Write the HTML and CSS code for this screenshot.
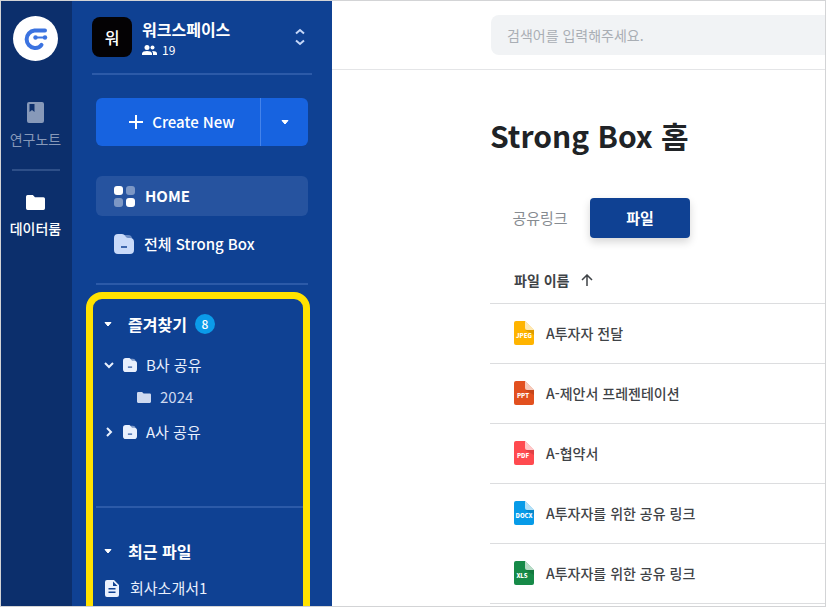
FILE: index.html
```html
<!DOCTYPE html>
<html lang="ko">
<head>
<meta charset="utf-8">
<meta name="viewport" content="width=device-width, initial-scale=1">
<title>Strong Box</title>
<link rel="stylesheet" href="styles.css">
</head>
<body>
<svg class="defs" aria-hidden="true">
  <symbol id="box" viewBox="0 0 20 20">
    <path d="M9 1h5a4 4 0 0 1 4 4v1H9z" fill="currentColor" opacity=".5"/>
    <path d="M4 0h4c1.500 0 2.200.8 3 1.800S12.500 4 14 4h2a4 4 0 0 1 4 4v8a4 4 0 0 1-4 4H4a4 4 0 0 1-4-4V4a4 4 0 0 1 4-4z" fill="currentColor"/>
    <path d="M7 13h6" stroke="#0f4193" stroke-width="1.500"/>
  </symbol>
  <symbol id="folder" viewBox="0 0 18 14">
    <path d="M1.500 0h5l2 2h8A1.500 1.500 0 0 1 18 3.500v9a1.500 1.500 0 0 1-1.500 1.500h-15A1.500 1.500 0 0 1 0 12.500v-11A1.500 1.500 0 0 1 1.500 0z" fill="currentColor"/>
  </symbol>
  <symbol id="caret" viewBox="0 0 8 5">
    <path d="M1 .5h6L4 4z" fill="currentColor" stroke="currentColor" stroke-linejoin="round"/>
  </symbol>
  <symbol id="file" viewBox="0 0 20 24">
    <path d="M2 0h9l9 9v13a2 2 0 0 1-2 2H2a2 2 0 0 1-2-2V2a2 2 0 0 1 2-2z" fill="currentColor"/>
    <path d="M11 9h9v5z" fill="#000" opacity=".12"/>
    <path d="M11 0l9 9h-7a2 2 0 0 1-2-2z" fill="#fff" opacity=".7"/>
  </symbol>
</svg>
<div class="app">
  <nav class="rail" aria-label="서비스">
    <a class="logo" href="#" aria-label="홈">
      <svg width="45" height="45" viewBox="0 0 45 45">
        <circle cx="22.500" cy="22.500" r="22.500" fill="#fff"/>
        <path d="M32 14.500H21.500a8.800 8.800 0 0 0 0 17.500h1c2.800 0 4.500-1 6-3.200" fill="none" stroke="#3b73e0" stroke-width="4" stroke-linecap="round"/>
        <path d="M23 21.500h9" stroke="#3b73e0" stroke-width="2"/>
        <circle cx="22.500" cy="21.500" r="2.200" fill="#3b73e0"/>
        <circle cx="32" cy="21.500" r="2.200" fill="#3b73e0"/>
      </svg>
    </a>
    <a class="rail-item muted" href="#">
      <svg width="17" height="21" viewBox="0 0 17 21"><path fill-rule="evenodd" fill="currentColor" d="M2 0h13a2 2 0 0 1 2 2v17a2 2 0 0 1-2 2H2a2 2 0 0 1-2-2V2a2 2 0 0 1 2-2zM2.500 2v8l2.500-2 2.500 2V2z"/></svg>
      연구노트
    </a>
    <hr class="rail-line">
    <a class="rail-item" href="#">
      <svg width="19" height="15"><use href="#folder"/></svg>
      데이터룸
    </a>
  </nav>

  <aside class="side">
    <header class="workspace">
      <span class="avatar">워</span>
      <div class="workspace-info">
        <strong>워크스페이스</strong>
        <span class="members">
          <svg width="15" height="10" viewBox="0 0 15 10" fill="currentColor"><circle cx="5" cy="2.500" r="2.500"/><circle cx="10.500" cy="2.500" r="2"/><path d="M0 10V8.500C0 6.800 2.500 6 5 6s5 .8 5 2.500V10zM11 10V8.500c0-1-.4-1.800-1-2.400 2.500-.1 5 .7 5 2.400V10z"/></svg>
          19
        </span>
      </div>
      <button class="switch" aria-label="워크스페이스 변경">
        <svg width="10" height="18" viewBox="0 0 10 18" fill="none" stroke="currentColor" stroke-width="2"><path d="M1 5.500l4-3.500 4 3.500M1 12.500l4 3.500 4-3.500"/></svg>
      </button>
    </header>

    <div class="create">
      <button class="create-main">
        <svg width="14" height="14" viewBox="0 0 14 14" stroke="currentColor" stroke-width="2"><path d="M7 0v14M0 7h14"/></svg>
        Create New
      </button>
      <button class="create-more" aria-label="더 보기"><svg width="8" height="5"><use href="#caret"/></svg></button>
    </div>

    <nav class="menu">
      <a class="menu-item active" href="#">
        <svg width="21" height="21" viewBox="0 0 21 21" fill="currentColor"><rect width="9" height="9" rx="3"/><rect x="12" width="9" height="9" rx="3" opacity=".4"/><rect y="12" width="9" height="9" rx="3" opacity=".4"/><rect x="12" y="12" width="9" height="9" rx="3"/></svg>
        HOME
      </a>
      <a class="menu-item" href="#">
        <svg class="pale" width="20" height="20"><use href="#box"/></svg>
        전체 Strong Box
      </a>
    </nav>

    <section class="shortcuts">
      <h2 class="group"><svg width="8" height="5"><use href="#caret"/></svg>즐겨찾기 <span class="count">8</span></h2>
      <ul class="tree">
        <li class="node">
          <svg width="10" height="10" viewBox="0 0 10 10" fill="none" stroke="currentColor" stroke-width="2"><path d="M1 3l4 4 4-4"/></svg>
          <svg width="14" height="14"><use href="#box"/></svg>
          <a href="#">B사 공유</a>
        </li>
        <li class="node child">
          <svg width="14" height="11"><use href="#folder"/></svg>
          <a href="#">2024</a>
        </li>
        <li class="node">
          <svg width="10" height="10" viewBox="0 0 10 10" fill="none" stroke="currentColor" stroke-width="2"><path d="M3 1l4 4-4 4"/></svg>
          <svg width="14" height="14"><use href="#box"/></svg>
          <a href="#">A사 공유</a>
        </li>
      </ul>
      <hr class="group-line">
      <h2 class="group"><svg width="8" height="5"><use href="#caret"/></svg>최근 파일</h2>
      <ul class="recent">
        <li class="node recent-file">
          <svg width="14" height="17" viewBox="0 0 14 17"><path fill="currentColor" fill-rule="evenodd" d="M2 0h7l5 5v10a2 2 0 0 1-2 2H2a2 2 0 0 1-2-2V2a2 2 0 0 1 2-2zM8 1.500V6h4.500zM3.500 8v1.500h7V8zM3.500 11.500V13h7v-1.500z"/></svg>
          <a href="#">회사소개서1</a>
        </li>
      </ul>
    </section>
  </aside>

  <main class="main">
    <header class="topbar">
      <input class="search" type="search" aria-label="검색" placeholder="검색어를 입력해주세요.">
    </header>
    <div class="content">
      <h1>Strong Box 홈</h1>
      <div class="tabs" role="tablist">
        <button class="tab" role="tab" aria-selected="false">공유링크</button>
        <button class="tab selected" role="tab" aria-selected="true">파일</button>
      </div>
      <table class="files">
        <thead>
          <tr><th scope="col">파일 이름 <svg class="sort" width="12" height="12" viewBox="0 0 12 12" fill="none" stroke="currentColor" stroke-width="1.500"><path d="M6 12V1M1 6l5-5 5 5"/></svg></th></tr>
        </thead>
        <tbody>
          <tr><td><div class="file"><svg class="jpeg" width="20" height="24"><use href="#file"/><text x="10" y="17">JPEG</text></svg>A투자자 전달</div></td></tr>
          <tr><td><div class="file"><svg class="ppt" width="20" height="24"><use href="#file"/><text x="9" y="17">PPT</text></svg>A-제안서 프레젠테이션</div></td></tr>
          <tr><td><div class="file"><svg class="pdf" width="20" height="24"><use href="#file"/><text x="9" y="17">PDF</text></svg>A-협약서</div></td></tr>
          <tr><td><div class="file"><svg class="docx" width="20" height="24"><use href="#file"/><text x="10" y="17">DOCX</text></svg>A투자자를 위한 공유 링크</div></td></tr>
          <tr><td><div class="file"><svg class="xls" width="20" height="24"><use href="#file"/><text x="8" y="17">XLS</text></svg>A투자자를 위한 공유 링크</div></td></tr>
        </tbody>
      </table>
    </div>
  </main>
</div>
</body>
</html>
```
FILE: styles.css
```css
* { box-sizing: border-box; }

body {
  margin: 0;
  font-family: "Noto Sans CJK KR", "Noto Sans", sans-serif;
  font-size: 14px;
  line-height: 20px;
  color: #3f4347;
  background: #fff;
}

button, input { font: inherit; color: inherit; border: 0; padding: 0; background: none; }
a { color: inherit; text-decoration: none; }
h1, h2, ul, hr { margin: 0; padding: 0; border: 0; }
ul { list-style: none; }
svg { display: block; flex: none; }
.defs { position: absolute; width: 0; height: 0; }

.app {
  display: flex;
  height: 100vh;
  overflow: hidden;
  border: 1px solid #d3d4d6;
}

/* Service rail */
.rail {
  flex: none;
  width: 71px;
  padding: 15px 2px 0 0;
  display: flex;
  flex-direction: column;
  align-items: center;
  color: #fff;
  background: #0c2f6c;
}
.logo { margin-bottom: 41px; }
.rail-item {
  display: flex;
  flex-direction: column;
  align-items: center;
  gap: 8px;
  font-weight: 500;
}
.rail-item.muted { gap: 6px; color: #8799b9; font-weight: 400; }
.rail-line { width: 48px; height: 2px; margin: 20px 0 24px; background: #2e4f88; }

/* Sidebar */
.side {
  flex: none;
  width: 260px;
  padding: 16px 20px 0;
  color: #fff;
  background: #0f4193;
}
.workspace {
  display: flex;
  gap: 10px;
  height: 58px;
  border-bottom: 2px solid #2c5aa8;
}
.avatar {
  width: 40px;
  height: 40px;
  border-radius: 8px;
  background: #040204;
  font-size: 16px;
  font-weight: 500;
  line-height: 40px;
  text-align: center;
}
.workspace-info { flex: 1; padding-top: 1px; }
.workspace-info strong { display: block; font-size: 16px; font-weight: 700; line-height: 22px; }
.members { display: flex; align-items: center; gap: 5px; font-size: 12px; }
.switch { height: 40px; padding-right: 7px; color: #c4d6f8; }

.create {
  display: flex;
  height: 48px;
  margin: 23px 4px 30px;
  border-radius: 6px;
  background: #1763e0;
  font-size: 15px;
  font-weight: 500;
}
.create-main { flex: 1; display: flex; align-items: center; justify-content: center; gap: 9px; padding-left: 8px; }
.create-more { width: 48px; border-left: 1px solid #4583ea; display: flex; align-items: center; justify-content: center; }

.menu { margin: 0 4px; padding-bottom: 19px; border-bottom: 2px solid #2c5aa8; font-size: 15px; font-weight: 500; }
.menu-item { display: flex; align-items: center; gap: 10px; height: 40px; padding-left: 18px; border-radius: 6px; }
.menu-item + .menu-item { margin-top: 8px; }
.active { background: #26539f; font-weight: 700; }
.pale { color: #c9daf9; }

/* Highlighted shortcuts, running past the bottom of the window */
.shortcuts {
  margin: 7px 2px 0 -6px;
  height: 400px;
  padding: 13px 0 0 3px;
  border: 7px solid #ffe200;
  border-radius: 16px;
}
.group { display: flex; align-items: center; gap: 16px; height: 24px; padding-left: 8px; font-size: 16px; font-weight: 700; }
.count {
  width: 20px;
  height: 20px;
  margin-left: -8px;
  border-radius: 50%;
  background: #0b9be9;
  font-size: 12px;
  font-weight: 500;
  text-align: center;
}
.tree { padding: 13px 0 58px 8px; }
.node { display: flex; align-items: center; gap: 9px; height: 32px; font-size: 15px; color: #e9f0fd; }
.child { padding-left: 33px; color: #ced9ef; }
.child + .node { margin-top: 3px; }
.group-line { height: 2px; margin-bottom: 31px; background: #2c5aa8; }
.recent { padding: 9px 0 0 9px; }
.recent-file { gap: 11px; }

/* Main area */
.main { flex: 1; min-width: 0; }
.topbar { padding: 14px 0 14px 159px; border-bottom: 1px solid #e4e5e7; }
.search { display: block; width: 100%; height: 40px; padding-left: 16px; border-radius: 8px 0 0 8px; background: #f1f3f5; }
.search::placeholder { color: #a9aeb4; font-weight: 400; opacity: 1; }
.content { padding: 41px 0 0 158px; }
h1 { font-size: 30px; font-weight: 700; line-height: 48px; color: #202326; }
.tabs { display: flex; margin-top: 39px; }
.tab { width: 100px; height: 40px; border-radius: 4px; font-size: 15px; color: #868b91; font-weight: 400; }
.selected { background: #0f4193; color: #fff; font-weight: 700; box-shadow: 0 4px 8px rgba(0, 0, 0, .16); }
.files { width: 100%; margin-top: 20px; border-collapse: collapse; }
th { height: 45px; padding: 0 24px; text-align: left; font-weight: 700; border-bottom: 1px solid #dcdddf; }
.sort { display: inline-block; margin-left: 8px; }
td { height: 60px; padding: 0 24px; font-weight: 500; border-bottom: 1px solid #dcdddf; }
.file { display: flex; align-items: center; gap: 12px; }
.file text { font-size: 6px; font-weight: 900; fill: #fff; text-anchor: middle; }
.jpeg { color: #ffb400; }
.ppt { color: #e2501f; }
.pdf { color: #ff4a4f; }
.docx { color: #079be8; }
.xls { color: #168a48; }
```
